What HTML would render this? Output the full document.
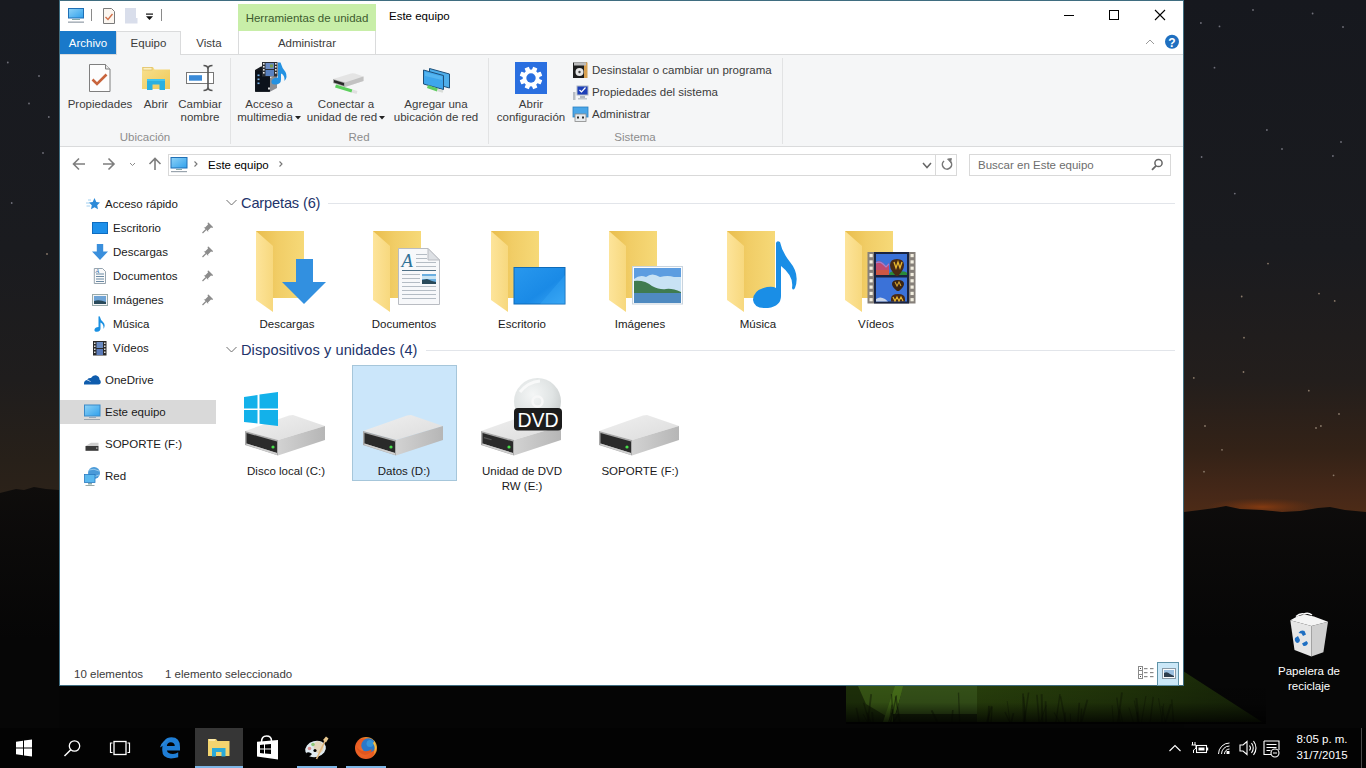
<!DOCTYPE html>
<html><head><meta charset="utf-8">
<style>
*{margin:0;padding:0;box-sizing:border-box}
html,body{width:1366px;height:768px;overflow:hidden;background:#000}
body{font-family:"Liberation Sans",sans-serif;font-size:11.5px;color:#000;position:relative}
.a{position:absolute}
.t{position:absolute;white-space:nowrap;line-height:14px}
svg{position:absolute;overflow:visible}
#sky{left:0;top:0;width:1366px;height:728px;background:#050505}
#taskbar{left:0;top:728px;width:1366px;height:40px;background:#030303}
#win{left:59px;top:0;width:1125px;height:686px;background:#fff;border:1px solid #3f6d80}
.rl{color:#3b3b3b;text-align:center}
.gl{color:#8d8d8d;text-align:center}
.nav{color:#1a1a1a}
.hdr{color:#22336a;font-size:14.6px;line-height:18px}
.lbl{color:#1a1a1a;text-align:center}
</style></head><body>
<div id="sky" class="a"></div>
<svg class="a" style="left:0;top:0" width="1366" height="728" viewBox="0 0 1366 728">
<defs>
 <linearGradient id="skyL" x1="0" y1="0" x2="0" y2="500" gradientUnits="userSpaceOnUse">
  <stop offset="0" stop-color="#181a20"/><stop offset="0.5" stop-color="#1a1b1f"/><stop offset="0.76" stop-color="#1f1d1d"/><stop offset="0.92" stop-color="#272019"/><stop offset="1" stop-color="#2c2219"/>
 </linearGradient>
 <linearGradient id="skyR" x1="0" y1="0" x2="0" y2="520" gradientUnits="userSpaceOnUse">
  <stop offset="0" stop-color="#16181e"/><stop offset="0.48" stop-color="#1a1b1f"/><stop offset="0.73" stop-color="#231e1c"/><stop offset="0.865" stop-color="#332217"/><stop offset="0.95" stop-color="#462818"/><stop offset="1" stop-color="#502c16"/>
 </linearGradient>
 <radialGradient id="glow" cx="0.5" cy="0.5" r="0.5"><stop offset="0" stop-color="#8a3c10" stop-opacity="0.9"/><stop offset="1" stop-color="#6a3010" stop-opacity="0"/></radialGradient>
 <linearGradient id="tentL" x1="0" y1="0" x2="0" y2="1"><stop offset="0" stop-color="#3c5c14"/><stop offset="1" stop-color="#24380c"/></linearGradient>
 <linearGradient id="tentR" x1="0" y1="0" x2="1" y2="0"><stop offset="0" stop-color="#2e4a10"/><stop offset="1" stop-color="#1e300a"/></linearGradient>
</defs>
<rect x="0" y="0" width="59" height="500" fill="url(#skyL)"/>
<rect x="1184" y="0" width="182" height="520" fill="url(#skyR)"/>
<circle cx="1241.7" cy="296.5" r="0.9" fill="#8a7a6a"/><circle cx="1244" cy="337.7" r="0.9" fill="#8a7a6a"/><circle cx="1193.8" cy="377.9" r="0.9" fill="#8a7a6a"/><circle cx="1243.5" cy="372" r="0.9" fill="#8a7a6a"/><circle cx="1308.8" cy="390.7" r="0.9" fill="#8a7a6a"/><circle cx="1339" cy="414" r="0.9" fill="#8a7a6a"/><circle cx="1320.9" cy="426" r="0.9" fill="#8a7a6a"/><circle cx="1316" cy="428" r="0.9" fill="#8a7a6a"/><circle cx="1205" cy="426" r="0.9" fill="#8a7a6a"/><circle cx="1222" cy="449.8" r="0.9" fill="#8a7a6a"/><circle cx="1204" cy="471.7" r="0.9" fill="#8a7a6a"/><circle cx="1333.6" cy="475.3" r="0.9" fill="#8a7a6a"/><circle cx="1319" cy="293.6" r="0.9" fill="#8a7a6a"/><circle cx="1334.7" cy="300.9" r="0.9" fill="#8a7a6a"/><circle cx="1268" cy="263.6" r="0.9" fill="#8a7a6a"/><circle cx="1200.9" cy="23" r="0.9" fill="#70707a"/><circle cx="1219.5" cy="26.4" r="0.9" fill="#70707a"/><circle cx="1341" cy="142" r="0.9" fill="#70707a"/><circle cx="1332.9" cy="156" r="0.9" fill="#70707a"/><circle cx="1201.6" cy="157" r="0.9" fill="#70707a"/><circle cx="1266.9" cy="130" r="0.9" fill="#70707a"/><circle cx="1282" cy="149" r="0.9" fill="#70707a"/><circle cx="1234.8" cy="193.6" r="0.9" fill="#70707a"/><circle cx="1343" cy="27" r="0.9" fill="#70707a"/><circle cx="1214.5" cy="67.7" r="0.9" fill="#70707a"/><circle cx="1253" cy="10" r="0.9" fill="#70707a"/><circle cx="1312.6" cy="13.5" r="0.9" fill="#70707a"/><circle cx="43" cy="153" r="0.9" fill="#70707a"/><circle cx="7.8" cy="62.5" r="0.9" fill="#70707a"/><circle cx="39" cy="76" r="0.9" fill="#70707a"/><circle cx="29" cy="103.5" r="0.9" fill="#70707a"/><circle cx="47" cy="254" r="0.9" fill="#8a7a6a"/><circle cx="11.7" cy="203" r="0.9" fill="#70707a"/><circle cx="48.8" cy="117" r="0.9" fill="#70707a"/>
<ellipse cx="1262" cy="507" rx="55" ry="9" fill="url(#glow)"/>
<linearGradient id="gGround" x1="0" y1="480" x2="0" y2="640" gradientUnits="userSpaceOnUse"><stop offset="0" stop-color="#0f0d0c"/><stop offset="1" stop-color="#060606"/></linearGradient><polygon points="0,493 8,491 16,489 24,490 34,487 46,489 59,490 59,728 0,728" fill="url(#gGround)"/>
<polygon points="1184,512 1200,510 1215,508 1226,506 1240,509 1262,510 1282,512 1300,511 1318,508 1330,507 1345,510 1366,512 1366,728 1184,728" fill="url(#gGround)"/>
<!-- tent -->
<linearGradient id="gGrass" x1="0" y1="0" x2="1" y2="0"><stop offset="0" stop-color="#2a420c"/><stop offset="0.5" stop-color="#22360a"/><stop offset="1" stop-color="#172508"/></linearGradient>
<linearGradient id="gFade" x1="0" y1="0" x2="0" y2="1"><stop offset="0" stop-color="#000" stop-opacity="0"/><stop offset="0.6" stop-color="#000" stop-opacity="0.15"/><stop offset="1" stop-color="#000" stop-opacity="0.8"/></linearGradient>
<polygon points="976,686 1183,686 1183,671 1262,722 976,722" fill="url(#gGrass)"/>
<polygon points="846,686 897,686 884,722 846,722" fill="#1f320a"/>
<polygon points="858,686 897,686 886,716 866,704" fill="#3a5a16"/>
<polygon points="895,686 904,686 893,722 883,722" fill="#4a741a"/>
<polygon points="903,686 977,686 977,714 896,714" fill="#38561a"/>
<rect x="893" y="714" width="84" height="8" fill="#1a280a"/>
<linearGradient id="gFade2" x1="0" y1="670" x2="0" y2="724" gradientUnits="userSpaceOnUse"><stop offset="0" stop-color="#000" stop-opacity="0"/><stop offset="0.6" stop-color="#000" stop-opacity="0.15"/><stop offset="1" stop-color="#000" stop-opacity="0.85"/></linearGradient><g><path d="M1064.8 722 L1065.2 712.4" stroke="#0e1605" stroke-width="1.2" opacity="0.45"/><path d="M869.1 722 L863.6 702.8" stroke="#0e1605" stroke-width="1.3" opacity="0.45"/><path d="M873.1 722 L872.1 712.0" stroke="#0e1605" stroke-width="1.8" opacity="0.45"/><path d="M890.9 722 L892.4 709.1" stroke="#0e1605" stroke-width="1.9" opacity="0.45"/><path d="M1040.4 722 L1046.2 705.3" stroke="#0e1605" stroke-width="0.9" opacity="0.45"/><path d="M1133.3 722 L1129.0 707.6" stroke="#0e1605" stroke-width="0.9" opacity="0.45"/><path d="M951.8 722 L952.8 710.0" stroke="#0e1605" stroke-width="1.6" opacity="0.45"/><path d="M870.7 722 L867.2 712.7" stroke="#0e1605" stroke-width="1.6" opacity="0.45"/><path d="M991.1 722 L992.1 707.1" stroke="#0e1605" stroke-width="1.3" opacity="0.45"/><path d="M1080.7 722 L1081.6 708.6" stroke="#0e1605" stroke-width="1.4" opacity="0.45"/><path d="M1138.8 722 L1136.3 698.0" stroke="#0e1605" stroke-width="2.0" opacity="0.45"/><path d="M889.0 722 L892.0 704.8" stroke="#0e1605" stroke-width="1.0" opacity="0.45"/><path d="M1011.4 722 L1013.4 713.1" stroke="#0e1605" stroke-width="1.7" opacity="0.45"/><path d="M1039.1 722 L1036.9 694.7" stroke="#0e1605" stroke-width="1.6" opacity="0.45"/><path d="M1046.1 722 L1045.6 701.2" stroke="#0e1605" stroke-width="1.8" opacity="0.45"/><path d="M1161.7 722 L1163.7 703.6" stroke="#0e1605" stroke-width="0.9" opacity="0.45"/><path d="M1081.5 722 L1087.4 699.8" stroke="#0e1605" stroke-width="1.8" opacity="0.45"/><path d="M1070.7 722 L1070.2 713.5" stroke="#0e1605" stroke-width="1.0" opacity="0.45"/><path d="M888.6 722 L891.9 712.7" stroke="#0e1605" stroke-width="1.0" opacity="0.45"/><path d="M1137.6 722 L1137.0 712.2" stroke="#0e1605" stroke-width="1.5" opacity="0.45"/><path d="M1141.5 722 L1145.9 696.0" stroke="#0e1605" stroke-width="1.1" opacity="0.45"/><path d="M987.0 722 L991.7 706.1" stroke="#0e1605" stroke-width="1.9" opacity="0.45"/><path d="M1010.0 722 L1007.2 701.0" stroke="#0e1605" stroke-width="0.8" opacity="0.45"/><path d="M988.3 722 L989.0 705.9" stroke="#0e1605" stroke-width="1.9" opacity="0.45"/><path d="M1077.9 722 L1079.3 702.7" stroke="#0e1605" stroke-width="1.6" opacity="0.45"/><path d="M867.8 722 L871.2 694.2" stroke="#0e1605" stroke-width="1.8" opacity="0.45"/><path d="M1113.3 722 L1112.1 705.4" stroke="#0e1605" stroke-width="0.9" opacity="0.45"/><path d="M1059.3 722 L1054.1 712.6" stroke="#0e1605" stroke-width="1.1" opacity="0.45"/><path d="M867.3 722 L863.2 714.0" stroke="#0e1605" stroke-width="0.9" opacity="0.45"/><path d="M1138.5 722 L1134.3 700.5" stroke="#0e1605" stroke-width="1.1" opacity="0.45"/><path d="M890.5 722 L896.5 695.3" stroke="#0e1605" stroke-width="1.4" opacity="0.45"/><path d="M1009.7 722 L1004.9 712.1" stroke="#0e1605" stroke-width="1.2" opacity="0.45"/><path d="M937.4 722 L931.6 710.4" stroke="#0e1605" stroke-width="1.9" opacity="0.45"/><path d="M1024.3 722 L1024.8 710.8" stroke="#0e1605" stroke-width="0.8" opacity="0.45"/><path d="M1024.3 722 L1028.6 692.5" stroke="#0e1605" stroke-width="1.6" opacity="0.45"/><path d="M1025.8 722 L1023.7 696.9" stroke="#0e1605" stroke-width="1.1" opacity="0.45"/><path d="M1117.8 722 L1122.0 692.3" stroke="#0e1605" stroke-width="1.8" opacity="0.45"/><path d="M1120.0 722 L1116.8 697.7" stroke="#0e1605" stroke-width="1.4" opacity="0.45"/><path d="M859.2 722 L856.3 707.9" stroke="#0e1605" stroke-width="1.6" opacity="0.45"/><path d="M1165.6 722 L1170.9 704.2" stroke="#0e1605" stroke-width="2.0" opacity="0.45"/><path d="M1165.2 722 L1161.8 706.0" stroke="#0e1605" stroke-width="1.1" opacity="0.45"/><path d="M1055.9 722 L1060.0 694.2" stroke="#0e1605" stroke-width="1.4" opacity="0.45"/><path d="M1065.5 722 L1060.5 696.4" stroke="#0e1605" stroke-width="1.6" opacity="0.45"/><path d="M1150.2 722 L1153.2 696.8" stroke="#0e1605" stroke-width="1.4" opacity="0.45"/><path d="M959.7 722 L958.5 692.6" stroke="#0e1605" stroke-width="1.3" opacity="0.45"/><path d="M1162.4 722 L1158.5 698.1" stroke="#0e1605" stroke-width="1.0" opacity="0.45"/><path d="M899.9 722 L895.6 696.3" stroke="#0e1605" stroke-width="1.8" opacity="0.45"/><path d="M1173.5 722 L1171.7 699.5" stroke="#0e1605" stroke-width="1.5" opacity="0.45"/><path d="M893.2 722 L898.9 713.7" stroke="#0e1605" stroke-width="1.6" opacity="0.45"/><path d="M1023.8 722 L1023.0 693.5" stroke="#0e1605" stroke-width="1.8" opacity="0.45"/><path d="M1122.6 722 L1119.7 709.4" stroke="#0e1605" stroke-width="1.2" opacity="0.45"/><path d="M893.3 722 L891.5 694.0" stroke="#0e1605" stroke-width="1.3" opacity="0.45"/><path d="M1042.5 722 L1041.6 694.1" stroke="#0e1605" stroke-width="1.9" opacity="0.45"/></g>
<rect x="846" y="670" width="420" height="54" fill="url(#gFade2)"/>
</svg>
<div id="taskbar" class="a"></div>

<div id="win" class="a"></div>
<!-- ===== TITLE BAR ===== -->
<div class="t" style="left:389px;top:9px">Este equipo</div>
<div class="a" style="left:238px;top:4px;width:138px;height:27px;background:#c8eea8"></div>
<div class="t" style="left:238px;top:11px;width:138px;text-align:center;color:#3d5b2f">Herramientas de unidad</div>

<!-- ===== RIBBON TABS ===== -->
<div class="a" style="left:60px;top:31px;width:56px;height:23px;background:#1979ca"></div>
<div class="t" style="left:60px;top:36px;width:56px;text-align:center;color:#fff">Archivo</div>
<div class="a" style="left:60px;top:54px;width:1123px;height:93px;background:#f5f6f7;border-top:1px solid #dadbdc;border-bottom:1px solid #dadbdc"></div>
<div class="a" style="left:116px;top:31px;width:65px;height:24px;background:#f5f6f7;border:1px solid #dadbdc;border-bottom:none"></div>
<div class="t" style="left:116px;top:36px;width:65px;text-align:center;color:#3b3b3b">Equipo</div>
<div class="t" style="left:181px;top:36px;width:56px;text-align:center;color:#3b3b3b">Vista</div>
<div class="a" style="left:238px;top:31px;width:138px;height:23px;border-left:1px solid #dadbdc;border-right:1px solid #dadbdc"></div>
<div class="t" style="left:238px;top:36px;width:138px;text-align:center;color:#3b3b3b">Administrar</div>

<!-- ===== RIBBON CONTENT ===== -->
<div class="a" style="left:230px;top:58px;width:1px;height:86px;background:#e2e3e4"></div>
<div class="a" style="left:488px;top:58px;width:1px;height:86px;background:#e2e3e4"></div>
<div class="a" style="left:782px;top:58px;width:1px;height:86px;background:#e2e3e4"></div>

<div class="t rl" style="left:60px;top:97px;width:80px">Propiedades</div>
<div class="t rl" style="left:138px;top:97px;width:36px">Abrir</div>
<div class="t rl" style="left:174px;top:97px;width:52px">Cambiar</div>
<div class="t rl" style="left:174px;top:110px;width:52px">nombre</div>
<div class="t gl" style="left:60px;top:130px;width:170px">Ubicación</div>

<div class="t rl" style="left:234px;top:97px;width:70px">Acceso a</div>
<div class="t rl" style="left:234px;top:110px;width:70px">multimedia<svg style="position:relative;display:inline-block;vertical-align:middle;margin-left:2px" width="6" height="4"><polygon points="0,0 6,0 3,3.5" fill="#222"/></svg></div>
<div class="t rl" style="left:304px;top:97px;width:84px">Conectar a</div>
<div class="t rl" style="left:304px;top:110px;width:84px">unidad de red<svg style="position:relative;display:inline-block;vertical-align:middle;margin-left:2px" width="6" height="4"><polygon points="0,0 6,0 3,3.5" fill="#222"/></svg></div>
<div class="t rl" style="left:390px;top:97px;width:92px">Agregar una</div>
<div class="t rl" style="left:390px;top:110px;width:92px">ubicación de red</div>
<div class="t gl" style="left:230px;top:130px;width:258px">Red</div>

<div class="t rl" style="left:490px;top:97px;width:82px">Abrir</div>
<div class="t rl" style="left:490px;top:110px;width:82px">configuración</div>
<div class="t rl" style="left:592px;top:63px;text-align:left">Desinstalar o cambiar un programa</div>
<div class="t rl" style="left:592px;top:85px;text-align:left">Propiedades del sistema</div>
<div class="t rl" style="left:592px;top:107px;text-align:left">Administrar</div>
<div class="t gl" style="left:488px;top:130px;width:294px">Sistema</div>

<!-- ===== ADDRESS BAR ===== -->
<div class="a" style="left:168px;top:154px;width:768px;height:22px;border:1px solid #d9d9d9"></div>
<div class="a" style="left:935px;top:154px;width:22px;height:22px;border:1px solid #d9d9d9"></div>
<div class="t" style="left:208px;top:158px">Este equipo</div>
<div class="a" style="left:969px;top:154px;width:202px;height:22px;border:1px solid #d9d9d9"></div>
<div class="t" style="left:978px;top:158px;color:#6d6d6d">Buscar en Este equipo</div>

<!-- ===== NAV PANE ===== -->
<div class="a" style="left:60px;top:400px;width:156px;height:24px;background:#d9d9d9"></div>
<div class="t nav" style="left:105px;top:197px">Acceso rápido</div>
<div class="t nav" style="left:113px;top:221px">Escritorio</div>
<div class="t nav" style="left:113px;top:245px">Descargas</div>
<div class="t nav" style="left:113px;top:269px">Documentos</div>
<div class="t nav" style="left:113px;top:293px">Imágenes</div>
<div class="t nav" style="left:113px;top:317px">Música</div>
<div class="t nav" style="left:113px;top:341px">Vídeos</div>
<div class="t nav" style="left:105px;top:373px">OneDrive</div>
<div class="t nav" style="left:105px;top:405px">Este equipo</div>
<div class="t nav" style="left:105px;top:437px">SOPORTE (F:)</div>
<div class="t nav" style="left:105px;top:469px">Red</div>

<!-- ===== CONTENT ===== -->
<div class="t hdr" style="left:241px;top:194px;letter-spacing:-0.15px">Carpetas (6)</div>
<div class="a" style="left:328px;top:203px;width:847px;height:1px;background:#e2e5ea"></div>
<div class="t hdr" style="left:241px;top:341px;letter-spacing:0.08px">Dispositivos y unidades (4)</div>
<div class="a" style="left:426px;top:350px;width:749px;height:1px;background:#e2e5ea"></div>

<div class="t lbl" style="left:237px;top:317px;width:100px">Descargas</div>
<div class="t lbl" style="left:354px;top:317px;width:100px">Documentos</div>
<div class="t lbl" style="left:472px;top:317px;width:100px">Escritorio</div>
<div class="t lbl" style="left:590px;top:317px;width:100px">Imágenes</div>
<div class="t lbl" style="left:708px;top:317px;width:100px">Música</div>
<div class="t lbl" style="left:826px;top:317px;width:100px">Vídeos</div>

<div class="a" style="left:352px;top:365px;width:105px;height:116px;background:#cbe6fa;border:1px solid #a6c6da"></div>
<div class="t lbl" style="left:236px;top:464px;width:100px">Disco local (C:)</div>
<div class="t lbl" style="left:354px;top:464px;width:100px">Datos (D:)</div>
<div class="t lbl" style="left:472px;top:464px;width:100px">Unidad de DVD</div>
<div class="t lbl" style="left:472px;top:479px;width:100px">RW (E:)</div>
<div class="t lbl" style="left:590px;top:464px;width:100px">SOPORTE (F:)</div>

<!-- ===== STATUS BAR ===== -->
<div class="t" style="left:74px;top:667px;color:#3b3b3b">10 elementos</div>
<div class="t" style="left:165px;top:667px;color:#3b3b3b">1 elemento seleccionado</div>

<!-- ===== DESKTOP ===== -->
<div class="t" style="left:1260px;top:664px;width:98px;text-align:center;color:#fff">Papelera de</div>
<div class="t" style="left:1260px;top:679px;width:98px;text-align:center;color:#fff">reciclaje</div>

<!-- ===== TASKBAR ===== -->
<div class="a" style="left:195px;top:728px;width:48px;height:40px;background:#363636"></div>
<div class="a" style="left:195px;top:766px;width:48px;height:2px;background:#7eb6e6"></div>
<div class="a" style="left:297px;top:766px;width:40px;height:2px;background:#7eb6e6"></div>
<div class="a" style="left:346px;top:766px;width:40px;height:2px;background:#7eb6e6"></div>
<div class="a" style="left:1361px;top:728px;width:1px;height:40px;background:#4a4a4a"></div>
<div class="t" style="left:1286px;top:732px;width:72px;text-align:center;color:#fff">8:05 p. m.</div>
<div class="t" style="left:1286px;top:748px;width:72px;text-align:center;color:#fff">31/7/2015</div>

<svg class="a" style="left:0;top:0" width="1366" height="768" viewBox="0 0 1366 768">
<defs>
 <linearGradient id="gBack" x1="0" y1="0" x2="1" y2="0">
  <stop offset="0" stop-color="#e9bd4c"/><stop offset="0.45" stop-color="#f1cd66"/><stop offset="1" stop-color="#f6d978"/>
 </linearGradient>
 <linearGradient id="gFlap" x1="0" y1="0" x2="1" y2="0">
  <stop offset="0" stop-color="#fde49a"/><stop offset="1" stop-color="#f7d87e"/>
 </linearGradient>
 <g id="fold">
  <rect x="0" y="0" width="48" height="67" fill="url(#gBack)"/>
  <polygon points="0,0 17,15 17,81 0,69" fill="url(#gFlap)"/>
 </g>
 <linearGradient id="gTop" x1="0" y1="0" x2="1" y2="1">
  <stop offset="0" stop-color="#f0f0f0"/><stop offset="1" stop-color="#dcdcdc"/>
 </linearGradient>
 <linearGradient id="gRight" x1="0" y1="0" x2="1" y2="0">
  <stop offset="0" stop-color="#d2d2d2"/><stop offset="1" stop-color="#b6b6b6"/>
 </linearGradient>
 <g id="drive">
  <polygon points="0,0 44,-15.5 48,-16 80,-5 33,9" fill="url(#gTop)"/>
  <polygon points="33,9 80,-5 80,9 33,24.5" fill="url(#gRight)"/>
  <polygon points="0,0 33,9 33,24.5 0,14" fill="#a8a8a8"/>
  <polygon points="1.5,2 32,10.5 32,22 1.5,12.5" fill="#2a2a2a"/>
  <polygon points="1.5,12.5 32,22 32,24 1.5,14" fill="#cfcfcf"/>
  <circle cx="28" cy="16" r="1.6" fill="#47e04a"/>
 </g>
</defs>
<!-- folders -->
<use href="#fold" x="256" y="231"/>
<use href="#fold" x="373" y="231"/>
<use href="#fold" x="491" y="231"/>
<use href="#fold" x="609" y="231"/>
<use href="#fold" x="727" y="231"/>
<use href="#fold" x="845" y="231"/>
<!-- Descargas arrow -->
<polygon points="296,259 313,259 313,282 326,282 304,304 282,282 296,282" fill="#3290e0"/>
<!-- Documentos doc -->
<polygon points="398.5,248.5 428,248.5 439.5,260 439.5,304.5 398.5,304.5" fill="#f7f8fa" stroke="#b9bcc2" stroke-width="1"/>
<polygon points="428,248.5 428,260 439.5,260" fill="#dde0e4" stroke="#b9bcc2" stroke-width="1"/>
<text x="401.5" y="266.5" font-family="Liberation Serif" font-style="italic" font-size="18.5" fill="#2f7196">A</text>
<g stroke="#b4bcc4" stroke-width="1">
 <line x1="416" y1="254.5" x2="427" y2="254.5"/><line x1="416" y1="258.5" x2="427" y2="258.5"/><line x1="416" y1="262.5" x2="436" y2="262.5"/><line x1="416" y1="266.5" x2="436" y2="266.5"/>
 <line x1="402" y1="274.5" x2="420" y2="274.5"/><line x1="402" y1="278.5" x2="420" y2="278.5"/><line x1="402" y1="282.5" x2="420" y2="282.5"/>
 <line x1="402" y1="286.5" x2="436" y2="286.5"/><line x1="402" y1="290.5" x2="436" y2="290.5"/><line x1="402" y1="294.5" x2="436" y2="294.5"/><line x1="402" y1="298.5" x2="436" y2="298.5"/>
</g>
<line x1="402" y1="270.5" x2="436" y2="270.5" stroke="#4d6f86" stroke-width="1.2"/>
<rect x="422" y="274" width="14" height="10" fill="#6aaee0"/>
<rect x="422" y="276" width="14" height="3" fill="#c8e4f4"/>
<polygon points="422,280 427,279 432,281 436,282 436,284 422,284" fill="#2a4a5a"/>
<!-- Escritorio monitor -->
<linearGradient id="gDesk" x1="0" y1="0" x2="1" y2="1"><stop offset="0" stop-color="#2898ee"/><stop offset="0.6" stop-color="#1a8ae6"/><stop offset="1" stop-color="#3aa6f4"/></linearGradient>
<rect x="514" y="267.5" width="51" height="36.5" fill="url(#gDesk)" stroke="#0f6bb8" stroke-width="1"/>
<polygon points="540,304 565,275 565,304" fill="#3aa9f6" opacity="0.35"/>
<!-- Imagenes photo -->
<rect x="632.5" y="266.5" width="50" height="37.5" fill="#fafcfe" stroke="#c9d4de" stroke-width="1"/>
<rect x="634" y="268" width="47" height="35" fill="#5d9de0"/>
<path d="M634 279 Q640 274 646 277 Q652 272 660 277 Q668 275 674 277 L681 277 L681 292 L634 292 Z" fill="#c8e2f4"/>
<path d="M634 281 Q645 280 652 286 Q660 290 666 289 Q672 288 681 292 L681 294 L634 294 Z" fill="#3f7b4f"/>
<rect x="634" y="293" width="47" height="10" fill="#4f8ac0"/>
<!-- Musica note -->
<path d="M776 243 Q777 240 780 242 Q782 252 790 262 Q800 274 795 288 Q793 291 792 288 Q794 276 781 266 L781 296 Q781 306 768 308 Q754 309 753 300 Q753 290 767 287 Q773 286 776 288 Z" fill="#1a8ee6"/>
<!-- Videos film -->
<rect x="867.5" y="252" width="48" height="51.5" fill="#86807a"/>
<g fill="#f2eee0"><rect x="869.5" y="254.0" width="3.2" height="3.2"/><rect x="869.5" y="260.3" width="3.2" height="3.2"/><rect x="869.5" y="266.6" width="3.2" height="3.2"/><rect x="869.5" y="272.9" width="3.2" height="3.2"/><rect x="869.5" y="279.2" width="3.2" height="3.2"/><rect x="869.5" y="285.5" width="3.2" height="3.2"/><rect x="869.5" y="291.8" width="3.2" height="3.2"/><rect x="869.5" y="298.1" width="3.2" height="3.2"/><rect x="910.5" y="254.0" width="3.2" height="3.2"/><rect x="910.5" y="260.3" width="3.2" height="3.2"/><rect x="910.5" y="266.6" width="3.2" height="3.2"/><rect x="910.5" y="272.9" width="3.2" height="3.2"/><rect x="910.5" y="279.2" width="3.2" height="3.2"/><rect x="910.5" y="285.5" width="3.2" height="3.2"/><rect x="910.5" y="291.8" width="3.2" height="3.2"/><rect x="910.5" y="298.1" width="3.2" height="3.2"/></g>
<rect x="874" y="252" width="35" height="51.5" fill="#1a2440"/>
<rect x="876" y="254" width="31" height="21" fill="#3b72d8"/>
<rect x="876" y="277.5" width="31" height="24" fill="#3b72d8"/>
<path d="M876 262 Q880 260 883 263 L886 266 L889 263 L889 275 L876 275 Z" fill="#c04a70"/>
<path d="M876 263 Q880 261 883 264 L886 267 L889 264" fill="none" stroke="#a080d0" stroke-width="1.2"/>
<path d="M876 270 L889 270 L889 275 L876 275 Z" fill="#d05a3a" opacity="0.8"/>
<path d="M889 275 Q889 271 896 271 Q907 271 907 273 L907 275 Z" fill="#2a8a3a"/>
<path d="M897 259 Q904 259 904 265 Q904 270 898 276 L896 276 Q890 270 890 265 Q890 259 897 259 Z" fill="#4a2a14"/>
<path d="M894 262 L896 268 L898 262 L900 268 L902 262" fill="none" stroke="#e8b830" stroke-width="1.3"/>
<path d="M898 280 Q904 280 904 284 Q904 287 899 291 L897 291 Q892 287 892 284 Q892 280 898 280 Z" fill="#3a2414"/>
<path d="M895 282 L897 286 L899 282 L901 286" fill="none" stroke="#d0a030" stroke-width="1.1"/>
<path d="M898 294 Q905 294 905 299 L905 301.5 L891 301.5 L891 299 Q891 294 898 294 Z" fill="#4a2a14"/>
<path d="M893 297 L895 301 L897 297 L899 301 L901 297 L903 301" fill="none" stroke="#e8b830" stroke-width="1.2"/>
<path d="M876 299 Q880 296 885 299 L888 301.5 L876 301.5 Z" fill="#c8d4e8"/>

<!-- drives -->
<use href="#drive" x="245" y="431"/>
<use href="#drive" x="363" y="431"/>
<use href="#drive" x="481" y="431"/>
<use href="#drive" x="599" y="431"/>
<!-- windows logo -->
<g fill="#13b1ea">
 <polygon points="244,397 257.5,395 257.5,408.5 244,408.5"/>
 <polygon points="259.5,394.5 278,392 278,408.5 259.5,408.5"/>
 <polygon points="244,410 257.5,410 257.5,423.5 244,422"/>
 <polygon points="259.5,410 278,410 278,426 259.5,423.8"/>
</g>
<!-- DVD -->
<radialGradient id="gDisc" cx="0.4" cy="0.35" r="0.7"><stop offset="0" stop-color="#f4f6f6"/><stop offset="0.6" stop-color="#e0e4e4"/><stop offset="1" stop-color="#c8cccc"/></radialGradient><circle cx="537.5" cy="401.5" r="23.5" fill="url(#gDisc)"/><path d="M520 392 Q528 382 540 381" stroke="#fff" stroke-width="3" fill="none" opacity="0.7"/>
<circle cx="537.5" cy="401.5" r="5" fill="none" stroke="#f7f7f7" stroke-width="2.5"/>
<rect x="514" y="408" width="48" height="22.5" rx="4" fill="#1c1c1c"/>
<text x="538" y="427" text-anchor="middle" font-family="Liberation Sans" font-size="19.5" fill="#fff">DVD</text><rect x="484" y="437" width="8" height="1.2" fill="#555" transform="rotate(16 484 437)"/>
</svg>

<svg class="a" style="left:0;top:0" width="1366" height="768" viewBox="0 0 1366 768">
<defs>
 <linearGradient id="gScr" x1="0" y1="0" x2="1" y2="1"><stop offset="0" stop-color="#8fd3f7"/><stop offset="1" stop-color="#2fa0ec"/></linearGradient>
 <g id="pin"><path d="M0 10.5 L3.5 7" stroke="#8c8c8c" stroke-width="1.3"/><path d="M2.5 5 L5.5 2 L5 0.5 L6 0 L10.5 4.5 L10 5.5 L8.5 5 L5.5 8 L5.8 9.5 L1.2 4.8 Z" fill="#8c8c8c"/></g>
</defs>
<!-- QAT -->
<rect x="68.5" y="8.5" width="15" height="9.5" fill="url(#gScr)" stroke="#1f6fb5" stroke-width="1"/>
<rect x="72" y="19" width="8" height="1" fill="#8aa"/>
<rect x="68" y="21.5" width="16" height="1.3" fill="#9aa4ad"/>
<rect x="91" y="9" width="1" height="12" fill="#8a8a8a"/>
<path d="M103.5 8.5 L111.5 8.5 L114.5 11.5 L114.5 23.5 L103.5 23.5 Z" fill="#fbf6f0" stroke="#7a7a7a" stroke-width="1"/>
<path d="M105.5 17 L108 19.5 L112.5 14" fill="none" stroke="#d0704a" stroke-width="1.4"/>
<path d="M125 8 L136 8 L136 18 L137.5 18 L137.5 23.5 L125 23.5 Z" fill="#d9deeb"/>
<rect x="146" y="13.5" width="7" height="1.2" fill="#111"/>
<polygon points="146,16.2 153,16.2 149.5,20" fill="#111"/>
<rect x="161" y="9" width="1" height="12" fill="#8a8a8a"/>
<!-- window controls -->
<rect x="1064" y="15" width="10" height="1" fill="#000"/>
<rect x="1109.5" y="10.5" width="9" height="9" fill="none" stroke="#000" stroke-width="1"/>
<path d="M1155 10 L1165 20 M1165 10 L1155 20" stroke="#000" stroke-width="1.1"/>
<path d="M1146 44 L1150 40 L1154 44" fill="none" stroke="#9a9a9a" stroke-width="1"/>
<circle cx="1172" cy="41.8" r="7" fill="#1f6fc0"/>
<text x="1172" y="46.5" text-anchor="middle" font-family="Liberation Sans" font-weight="bold" font-size="12" fill="#fff">?</text>

<!-- ribbon big icons -->
<path d="M89.5 64.5 L105.5 64.5 L110 69 L110 91.5 L89.5 91.5 Z" fill="#fdfdfd" stroke="#7f7f7f" stroke-width="1"/>
<path d="M105.5 64.5 L105.5 69 L110 69" fill="#e8e8e8" stroke="#7f7f7f" stroke-width="1"/>
<path d="M92.5 79.5 L97 84 L106.5 74.5" fill="none" stroke="#c8643c" stroke-width="2.6"/>

<linearGradient id="gExp" x1="0" y1="0" x2="1" y2="1"><stop offset="0" stop-color="#f8e08c"/><stop offset="1" stop-color="#efc95a"/></linearGradient>
<path d="M142 67 L153 67 L154.5 69.5 L170 69.5 L170 89 L142 89 Z" fill="url(#gExp)"/>
<rect x="143" y="67.5" width="9" height="2.5" fill="#fdf0c0" stroke="#d8b860" stroke-width="0.6"/>
<path d="M147 79 L165 79 L165 90 L159.5 90 L159.5 84.5 L152.5 84.5 L152.5 90 L147 90 Z" fill="#2ab0e0"/>
<path d="M147 79 L165 79 L165 81 L147 81 Z" fill="#40c4ee"/>
<rect x="186.5" y="72.5" width="27" height="11" fill="#fff" stroke="#777" stroke-width="1"/>
<rect x="189" y="75.2" width="13" height="5.5" fill="#3a8ad8"/>
<path d="M203.5 65.5 Q208 65.5 208 69 L208 87 Q208 90.5 203.5 90.5 M212.5 65.5 Q208 65.5 208 69 M208 87 Q208 90.5 212.5 90.5" fill="none" stroke="#555" stroke-width="1.6"/>

<!-- multimedia -->
<polygon points="255,70 261,66.5 270,66.5 270,91.7 255,91.7" fill="#15181e"/>
<polygon points="270,78 277,75 277,88 270,91.7" fill="#8d8f93"/>
<rect x="255.5" y="71" width="14" height="20.7" fill="#0c121b"/>
<g fill="#7ab4ea"><rect x="257.5" y="74.5" width="2" height="1.6"/><rect x="257.5" y="78.5" width="2" height="1.6"/><rect x="257.5" y="82.5" width="2" height="1.6"/></g>
<rect x="268" y="87.5" width="2" height="2" fill="#ddd"/>
<rect x="262" y="62" width="15.5" height="14.5" fill="#2a2e34"/>
<g fill="#e8e8e8"><rect x="263" y="63" width="1.6" height="1.6"/><rect x="263" y="66" width="1.6" height="1.6"/><rect x="263" y="69" width="1.6" height="1.6"/><rect x="263" y="72" width="1.6" height="1.6"/>
<rect x="275" y="63" width="1.6" height="1.6"/><rect x="275" y="66" width="1.6" height="1.6"/><rect x="275" y="69" width="1.6" height="1.6"/><rect x="275" y="72" width="1.6" height="1.6"/></g>
<rect x="265.5" y="63" width="8.5" height="6" fill="#6b8cc4"/><rect x="265.5" y="70" width="8.5" height="6" fill="#5a82c0"/>
<rect x="270" y="64.5" width="3" height="3" fill="#7aa050"/>
<path d="M280.5 62.5 Q282 68 285.5 72 Q288 77 284.5 81 Q285 75 281 73.5 L281 79.5 Q281 84.5 275 84.5 Q271 84.5 271.5 81 Q272.5 77.5 278 77.5 L278 62.5 Z" fill="#2492e2"/>
<!-- conectar -->
<path d="M333 79 L351 73.5 Q353 73 355 73.6 L363.5 76.5 L363.5 81 L345 87 L333 83 Z" fill="#e4e4e4"/>
<polygon points="345,82.5 363.5,76.5 363.5,81 345,87" fill="#c2c2c2"/>
<polygon points="333,79 345,82.5 345,87 333,83" fill="#a8a8a8"/>
<polygon points="334,80 344,83 344,85.8 334,82.6" fill="#2a2a2a"/>
<path d="M335.5 86 L352 91" stroke="#5ccf5c" stroke-width="3.2"/>
<path d="M352 91 L357 92.5" stroke="#e0e0e0" stroke-width="3"/>
<!-- agregar -->
<polygon points="429.5,68.5 449.5,74 449.5,88 429.5,82.5" fill="#4eaeea" stroke="#1e4f78" stroke-width="1"/>
<polygon points="423.5,70 443.5,75.5 443.5,89.5 423.5,84" fill="#3ea6ec" stroke="#1e4f78" stroke-width="1"/>
<polygon points="425,72 442,76.5 442,80 425,76" fill="#6cc4f4" opacity="0.5"/>
<path d="M427.5 86.5 L437.5 90" stroke="#62cc62" stroke-width="3.2"/>
<path d="M437.5 90 L443 91.5" stroke="#d8dcd8" stroke-width="2.4"/>
<!-- config -->
<rect x="515" y="62" width="32" height="32" fill="#2a6fe0"/>
<circle cx="531" cy="78" r="8.4" fill="#fff"/>
<g fill="#fff" transform="translate(531,78) rotate(22.5)">
 <rect x="-2.3" y="-11.3" width="4.6" height="22.6" rx="0.6"/>
 <rect x="-2.3" y="-11.3" width="4.6" height="22.6" rx="0.6" transform="rotate(45)"/>
 <rect x="-2.3" y="-11.3" width="4.6" height="22.6" rx="0.6" transform="rotate(90)"/>
 <rect x="-2.3" y="-11.3" width="4.6" height="22.6" rx="0.6" transform="rotate(135)"/>
</g>
<circle cx="531" cy="78" r="4.7" fill="#2a6fe0"/>
<!-- small sistema icons -->
<rect x="573" y="62.5" width="14" height="15.5" fill="#1d1d1d"/>
<rect x="584" y="62.5" width="3.5" height="15.5" fill="#d8a050"/>
<rect x="574" y="62.5" width="12" height="3" fill="#bbb"/>
<circle cx="579.5" cy="72" r="4" fill="#e5e5e5"/><circle cx="579.5" cy="72" r="1.2" fill="#444"/>

<rect x="577" y="86" width="11" height="9" fill="#1d3fb8" stroke="#aeb7c4" stroke-width="1"/>
<path d="M579.5 90 L581.5 92 L585.5 87.5" fill="none" stroke="#fff" stroke-width="1.2"/>
<rect x="580" y="96" width="5" height="2" fill="#b0b8c0"/><rect x="578" y="98" width="9" height="1.5" fill="#c0c6cc"/>
<rect x="573" y="92" width="2.5" height="8" fill="#b9bec4"/>

<rect x="573" y="107" width="15" height="10" fill="#4aa6e8" stroke="#2a7fc0" stroke-width="0.8"/>
<rect x="575" y="114" width="11" height="7.5" fill="#e8ecef" stroke="#888" stroke-width="0.8"/>
<rect x="577" y="116.5" width="2" height="2" fill="#333"/><rect x="582" y="116.5" width="2" height="2" fill="#333"/>

<!-- address bar -->
<path d="M74 164 L85 164 M79 158.5 L73.5 164 L79 169.5" fill="none" stroke="#7d7d7d" stroke-width="1.6"/>
<path d="M103 164 L114 164 M108.5 158.5 L114 164 L108.5 169.5" fill="none" stroke="#7d7d7d" stroke-width="1.6"/>
<path d="M130 163 L132.5 165.5 L135 163" fill="none" stroke="#8a8a8a" stroke-width="1"/>
<path d="M155 158.5 L155 170 M149.5 164 L155 158.5 L160.5 164" fill="none" stroke="#7d7d7d" stroke-width="1.6"/>
<rect x="171" y="157.5" width="16" height="10.5" fill="url(#gScr)" stroke="#1f6fb5" stroke-width="1"/>
<rect x="176" y="169" width="6" height="1" fill="#8aa"/>
<rect x="171" y="171" width="16" height="1.2" fill="#9aa4ad"/>
<path d="M194.5 161.5 L197 164 L194.5 166.5" fill="none" stroke="#777" stroke-width="1.1"/>
<path d="M279.5 161.5 L282 164 L279.5 166.5" fill="none" stroke="#777" stroke-width="1.1"/>
<path d="M923 163 L927 167.5 L931 163" fill="none" stroke="#666" stroke-width="1.5"/>
<path d="M944 161 A4.6 4.6 0 1 0 950.5 161.5" fill="none" stroke="#777" stroke-width="1.6"/>
<path d="M947.5 159 L951.5 158.5 L950.5 162.5 Z" fill="#777" stroke="#777" stroke-width="0.8"/>
<circle cx="1158.5" cy="163" r="3.6" fill="none" stroke="#666" stroke-width="1.5"/>
<path d="M1156 165.8 L1152 169.8" stroke="#666" stroke-width="1.8"/>

<!-- nav pane icons -->
<path d="M94.5 198 L96.3 202 L100 202.5 L97.2 205.2 L98 209.3 L94.5 207.2 L91 209.3 L91.8 205.2 L89 202.5 L92.7 202 Z" fill="#2c8ad8"/>
<path d="M86 203 L90 203 M86.5 206 L90 206 M88 200 L91 200" stroke="#8cc4ec" stroke-width="0.8"/>
<rect x="92.5" y="222.5" width="15" height="11" fill="#1e90ea" stroke="#0e6cc0" stroke-width="1"/>
<path d="M96.8 244 L103.2 244 L103.2 251.5 L108 251.5 L100 260 L92 251.5 L96.8 251.5 Z" fill="#3a8fdc"/>
<path d="M94.3 268.5 L102.5 268.5 L105.5 271.5 L105.5 283.5 L94.3 283.5 Z" fill="#fafafa" stroke="#8a9aa6" stroke-width="0.9"/>
<g stroke="#5a7d9a" stroke-width="0.9"><line x1="96" y1="274" x2="104" y2="274"/><line x1="96" y1="276.5" x2="104" y2="276.5"/><line x1="96" y1="279" x2="104" y2="279"/><line x1="96" y1="281.5" x2="104" y2="281.5"/></g>
<text x="95.5" y="273" font-family="Liberation Serif" font-style="italic" font-size="6" fill="#2a6aa8">A</text>
<rect x="92.5" y="294.5" width="15" height="11" fill="#f5f5f5" stroke="#9aa" stroke-width="1"/>
<rect x="94" y="296" width="12" height="8" fill="#6fa4d6"/>
<path d="M94 301 Q99 299 106 302 L106 304 L94 304 Z" fill="#2a4a5a"/>
<path d="M98.5 316.5 Q99 316 99.8 316.6 Q100.5 320 103 322 Q106 325 103.5 329 Q104 324 100.5 322.5 L100.5 328.5 Q100.5 331.5 97 331.8 Q94 331.8 94.5 329.5 Q95 327 98.5 327 Z" fill="#1a90e2"/>
<rect x="93" y="341" width="13.5" height="14.5" fill="#2a2a2a"/>
<g fill="#ddd"><rect x="94" y="342.5" width="1.5" height="1.5"/><rect x="94" y="345.5" width="1.5" height="1.5"/><rect x="94" y="348.5" width="1.5" height="1.5"/><rect x="94" y="351.5" width="1.5" height="1.5"/>
<rect x="104" y="342.5" width="1.5" height="1.5"/><rect x="104" y="345.5" width="1.5" height="1.5"/><rect x="104" y="348.5" width="1.5" height="1.5"/><rect x="104" y="351.5" width="1.5" height="1.5"/></g>
<rect x="96.5" y="342" width="6.5" height="6" fill="#6a8ac0"/><rect x="96.5" y="349" width="6.5" height="6" fill="#5a7ab8"/>
<path d="M84 384.6 Q83.5 380.5 87 380 Q88 377.5 91 378 Q93 374.8 96.5 375.5 Q99.5 376.5 99.5 379.5 Q101 380.5 100.8 382.5 Q100.5 384.6 98.5 384.6 Z" fill="#0f5cad"/><path d="M87 380 Q89.5 380 90.5 382" fill="none" stroke="#fff" stroke-width="0.7"/>
<rect x="84.5" y="405" width="15.5" height="11" fill="url(#gScr)" stroke="#3a8ac8" stroke-width="1"/>
<rect x="89" y="417" width="7" height="1" fill="#9ab"/>
<rect x="84" y="419" width="16" height="1" fill="#9aa4ad"/>
<polygon points="85.5,446 91,442.7 98.5,442.7 98.5,446" fill="#cfcfcf"/>
<rect x="85.5" y="446" width="13" height="4.8" fill="#3a3a3a"/>
<rect x="96" y="447.5" width="1.5" height="1.2" fill="#bbb"/>
<circle cx="94" cy="473" r="6" fill="#4a9ad8"/>
<path d="M89 470 Q94 468 99 471 M90 476 Q94 478 99 475" stroke="#a8d4f0" stroke-width="0.8" fill="none"/>
<rect x="84.5" y="474.5" width="10.5" height="8" fill="#5ab8ee" stroke="#2a7ac0" stroke-width="0.8"/>
<rect x="88" y="483" width="4" height="1.5" fill="#8aa"/><rect x="85.5" y="485" width="9" height="1" fill="#9aa"/>
<!-- pins -->
<use href="#pin" x="202.5" y="222.5"/>
<use href="#pin" x="202.5" y="246.5"/>
<use href="#pin" x="202.5" y="270.5"/>
<use href="#pin" x="202.5" y="294.5"/>
<!-- content chevrons -->
<path d="M226.5 200 L231.5 205 L236.5 200" fill="none" stroke="#6f6f6f" stroke-width="1"/>
<path d="M226.5 347 L231.5 352 L236.5 347" fill="none" stroke="#6f6f6f" stroke-width="1"/>
</svg>

<svg class="a" style="left:0;top:0" width="1366" height="768" viewBox="0 0 1366 768">
<!-- status bar view buttons -->
<rect x="1138.5" y="666.5" width="4" height="12" fill="none" stroke="#8a8a8a" stroke-width="1"/>
<g fill="#8a8a8a"><rect x="1138.5" y="670" width="4" height="1"/><rect x="1138.5" y="674" width="4" height="1"/>
<rect x="1140" y="668" width="1" height="1" fill="#444"/><rect x="1140" y="676" width="1" height="1" fill="#444"/>
<rect x="1144" y="668" width="3.5" height="1.2"/><rect x="1150" y="668" width="3.5" height="1.2"/><rect x="1144" y="672" width="3.5" height="1.2"/><rect x="1150" y="672" width="3.5" height="1.2"/><rect x="1144" y="676" width="3.5" height="1.2"/><rect x="1150" y="676" width="3.5" height="1.2"/></g>
<rect x="1157.5" y="662.5" width="21" height="23" fill="#cbe8f8" stroke="#5f93a8" stroke-width="1"/>
<rect x="1162.5" y="668.5" width="13" height="10" fill="#fafafa" stroke="#8a9aa6" stroke-width="1"/>
<rect x="1164" y="670" width="10" height="7" fill="#9cc0e0"/>
<path d="M1164 673 Q1167 671 1170 674 Q1172 675 1174 676 L1174 677 L1164 677 Z" fill="#2e3e4e"/>
<!-- recycle bin -->
<polygon points="1290.3,620.3 1311.4,626 1311.4,656.5 1294.5,650" fill="#e6e6e6"/>
<polygon points="1311.4,626 1328,621.7 1323.4,652.3 1311.4,656.5" fill="#cfcfcf"/>
<polygon points="1290.3,620.3 1298,616 1305,614.5 1314,616.5 1328,621.7 1311.4,626" fill="#f4f4f4"/>
<path d="M1296 616.5 Q1300 613 1304 614 Q1308 612 1312 615" fill="none" stroke="#fff" stroke-width="1.5"/>
<g fill="#1f6fc2">
 <path d="M1298.5 633 Q1301 629.5 1304.5 631 L1306 634.5 L1303 636 L1301.5 633.5 Z"/>
 <path d="M1295 638 L1298 636 L1300 640 Q1299.5 643 1297 643 Q1294 641 1295 638 Z"/>
 <path d="M1302 643.5 L1306.5 641 L1308 643 Q1307 646.5 1303.5 646 Z"/>
</g>
<!-- taskbar: start -->
<g fill="#fff">
 <polygon points="16,741.8 23,740.8 23,747.5 16,747.5"/>
 <polygon points="24,740.6 32,739.6 32,747.5 24,747.5"/>
 <polygon points="16,748.5 23,748.5 23,755.2 16,754.3"/>
 <polygon points="24,748.5 32,748.5 32,756.4 24,755.4"/>
</g>
<circle cx="74.5" cy="746" r="5.2" fill="none" stroke="#fff" stroke-width="1.3"/>
<path d="M70.8 749.7 L64.5 756" stroke="#fff" stroke-width="1.5"/>
<rect x="114" y="741.5" width="12" height="13" fill="none" stroke="#fff" stroke-width="1.3"/>
<path d="M112.5 743 L110.5 743 L110.5 752.5 L112.5 752.5 M127.5 743 L129.5 743 L129.5 752.5 L127.5 752.5" fill="none" stroke="#fff" stroke-width="1.2"/>
<!-- edge -->
<path d="M162.2 750 Q162.2 737.3 171.5 737.3 Q180 737.3 180 747 L180 750.6 L166.9 750.6 Q167.5 754 173 754 Q176 754 178.2 752.3 L178.2 757.3 Q175 758.4 171 758.4 Q162.2 758.4 162.2 750 Z M166.8 745.9 L174.8 745.9 Q174.5 742.2 170.7 742.2 Q167.5 742.2 166.8 745.9 Z" fill="#1f7ed6" fill-rule="evenodd"/>
<path d="M160 747.5 Q162 739.5 171 738.8 Q165.5 741.5 163.2 745.5 Z" fill="#2a86d8"/>
<!-- explorer -->
<path d="M208 739 L216 739 L217.5 741 L229.5 741 L229.5 756 L208 756 Z" fill="#f3d46f"/>
<rect x="209" y="739" width="6" height="2" fill="#fbe9a8"/>
<path d="M212 748 L225.5 748 L225.5 756.5 L221.5 756.5 L221.5 752 L216 752 L216 756.5 L212 756.5 Z" fill="#2aaad9"/>
<!-- store -->
<polygon points="257,741.8 278,740 278,759.6 257,756.4" fill="#fff"/>
<path d="M261.5 742 Q261.5 736 266.5 736 Q271.5 736 271.5 741" fill="none" stroke="#fff" stroke-width="1.6"/>
<g fill="#000"><polygon points="260,745 264,744.6 264,748.6 260,748.6"/><polygon points="265,744.5 271,744 271,748.6 265,748.6"/><polygon points="260,749.6 264,749.6 264,753.4 260,753"/><polygon points="265,749.6 271,749.6 271,754 265,753.5"/></g>
<!-- paint -->
<g transform="rotate(-15 315.6 749)">
<ellipse cx="315.6" cy="749" rx="10.5" ry="8" fill="#dfeaf0"/>
<ellipse cx="319" cy="748" rx="5" ry="6" fill="#e8c898" opacity="0.6"/>
</g>
<path d="M306 753 Q309 751 312 754 Q310 757 307 756 Z" fill="#000"/>
<circle cx="315" cy="750.5" r="1.6" fill="#000"/>
<circle cx="309.5" cy="748.5" r="1.8" fill="#d89090"/><circle cx="313" cy="744.5" r="1.8" fill="#90c878"/>
<path d="M316.5 759 L325 741" stroke="#e0b880" stroke-width="1.6"/>
<polygon points="323,740 326,736.5 328.5,738.5 326,742.5" fill="#e8c890"/>
<!-- firefox -->
<radialGradient id="gFF" cx="0.35" cy="0.6" r="0.7"><stop offset="0" stop-color="#f06a28"/><stop offset="0.7" stop-color="#e85a22"/><stop offset="1" stop-color="#f5b030"/></radialGradient>
<circle cx="366" cy="748" r="11" fill="url(#gFF)"/>
<circle cx="368.5" cy="745.5" r="7.2" fill="#2a78c8"/>
<circle cx="370" cy="743.5" r="3.5" fill="#3aa0e0" opacity="0.7"/>
<path d="M356 746 Q359 751 364 751 Q368 752 372 749 Q371 754 365 755 Q358 754 356 746 Z" fill="#e2561e"/>
<path d="M374.5 741 Q378 748 374 754 Q376 748 373 743 Z" fill="#f6c040"/>
<!-- tray -->
<path d="M1169.5 751 L1175 745.5 L1180.5 751" fill="none" stroke="#fff" stroke-width="1.1"/>
<rect x="1196.5" y="745.5" width="10" height="7" fill="none" stroke="#fff" stroke-width="1.1"/>
<rect x="1207" y="747.5" width="1.2" height="3" fill="#fff"/>
<rect x="1198.5" y="747.5" width="6" height="3" fill="#fff"/>
<path d="M1192.5 742 L1192.5 745 M1195 742 L1195 745 M1191.5 745 L1196 745 L1196 748 Q1194 750 1193.5 750 L1193.5 753" fill="none" stroke="#fff" stroke-width="1"/>
<g fill="none" stroke="#fff" stroke-width="1">
 <path d="M1218.5 754 A11 11 0 0 1 1229.5 743"/><path d="M1221.5 754 A8 8 0 0 1 1229.5 746"/><path d="M1224.5 754 A5 5 0 0 1 1229.5 749"/>
</g>
<rect x="1226.5" y="751" width="3" height="3" fill="#fff"/>
<path d="M1240 745 L1243 745 L1247 741.5 L1247 754.5 L1243 751 L1240 751 Z" fill="none" stroke="#fff" stroke-width="1.1"/>
<path d="M1249.5 745.5 Q1251.5 748 1249.5 750.5 M1251.5 743 Q1255 748 1251.5 753" fill="none" stroke="#fff" stroke-width="1.1"/>
<path d="M1253.5 741 Q1258.5 748 1253.5 755" fill="none" stroke="#fff" stroke-width="1.1"/>
<path d="M1264 741 L1279 741 L1279 750 M1264 741 L1264 754.5 L1271 754.5" fill="none" stroke="#fff" stroke-width="1.1"/>
<g stroke="#fff" stroke-width="1"><line x1="1266.5" y1="744.5" x2="1276.5" y2="744.5"/><line x1="1266.5" y1="747.5" x2="1276.5" y2="747.5"/><line x1="1266.5" y1="750.5" x2="1270.5" y2="750.5"/></g>
<circle cx="1275" cy="753" r="4" fill="#000" stroke="#fff" stroke-width="1.1"/>
<line x1="1273" y1="753" x2="1277" y2="753" stroke="#fff" stroke-width="1"/>
</svg>
</body></html>
